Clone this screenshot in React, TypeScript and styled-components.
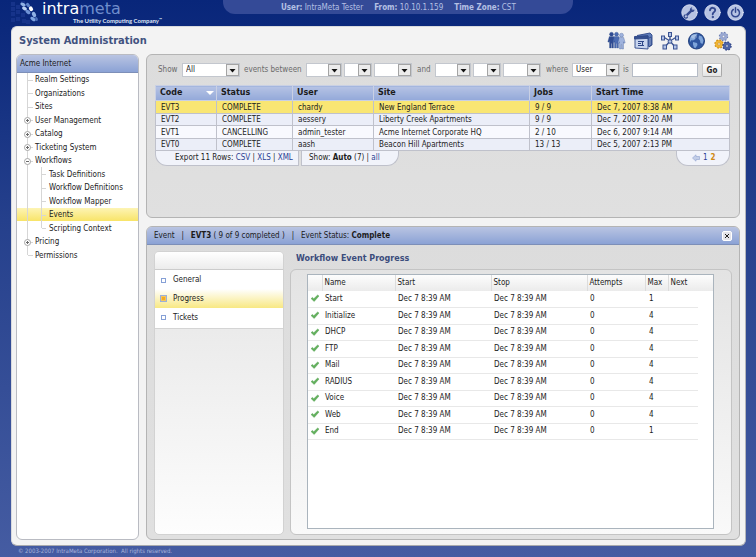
import React from "react";
import styled, { createGlobalStyle, css } from "styled-components";

const UI = `"DejaVu Sans Condensed", "Noto Sans", sans-serif`;
const WIDE = `"DejaVu Sans", sans-serif`;

const Global = createGlobalStyle`
  * { box-sizing: border-box; }
  body { margin: 0; background: #455ca2; font-family: ${UI}; font-size: 8px; line-height: 12px; color: #1c1c1c; }
  button, input, select { font: inherit; color: inherit; }
`;

const Page = styled.div`
  display: flex;
  flex-direction: column;
  min-height: 100vh;
  padding: 0 10px 0 11px;
  background: linear-gradient(#08267a 0, #0c297c 30px, #25408c 220px, #455ca2 100%);
`;

const TopBar = styled.header`
  display: grid;
  grid-template-columns: 16fr 350px 13fr;
  height: 26px;
`;

const Brand = styled.div`
  display: flex;
  align-items: flex-start;
  white-space: nowrap;
`;

const BrandWords = styled.div`
  display: flex;
  flex-direction: column;
  padding-left: 1px;
`;

const BrandName = styled.span`
  font: 16px/18px ${WIDE};
  color: #ffffff;
  span { color: #6f8dcc; }
`;

const Tagline = styled.span`
  display: flex;
  padding-left: 31px;
  font: bold 6px/6px Lato, sans-serif;
  color: #dfe5f6;
  sup { font-size: 4px; line-height: 4px; }
`;

const Session = styled.div`
  display: flex;
  justify-content: center;
  gap: 11px;
  height: 14px;
  padding-top: 2px;
  border-radius: 0 0 12px 12px;
  background: #344a97;
  color: #b4c0e4;
  white-space: nowrap;
`;

const TopTools = styled.div`
  display: flex;
  justify-content: flex-end;
  gap: 6px;
  padding: 4px 2px 0 0;
`;

const IconButton = styled.button`
  display: flex;
  align-self: flex-start;
  padding: 0;
  border: 0;
  background: none;
  cursor: pointer;
`;

const Shell = styled.main`
  flex: 1;
  display: flex;
  flex-direction: column;
  padding: 0 5px 5px 4px;
  border: 1px solid #d8dade;
  border-bottom-color: #a8aaae;
  border-right-color: #b4b6ba;
  border-radius: 6px;
  background: #f3f3f3;
`;

const TitleRow = styled.div`
  display: flex;
  align-items: center;
  justify-content: space-between;
  height: 27px;
  padding: 0 7px 0 3px;
`;

const Title = styled.h1`
  margin: 0;
  font: bold 11px/16px ${UI};
  color: #41527f;
`;

const ModuleNav = styled.nav`
  display: flex;
  gap: 7px;
`;

const Columns = styled.div`
  flex: 1;
  display: grid;
  grid-template-columns: 123px minmax(0, 1fr);
  gap: 7px;
`;

const Sidebar = styled.aside`
  border: 1px solid #b9bbc2;
  border-radius: 6px;
  background: #ffffff;
  overflow: hidden;
`;

const barFill = css`
  background: linear-gradient(#b9c4e2, #8ba2d5);
  border-bottom: 1px solid #7d8fb8;
`;

const SideHead = styled.div`
  ${barFill}
  height: 18px;
  padding: 3px 3px;
`;

const Tree = styled.ul`
  list-style: none;
  margin: 0;
  padding: 0;
`;

const TreeItem = styled.li<{ $deep?: boolean; $active?: boolean }>`
  display: flex;
  align-items: center;
  height: 13px;
  padding-left: ${(p) => (p.$deep ? 10 : 5)}px;
  background: ${(p) => (p.$active ? "linear-gradient(#fdf4b4, #f8e468)" : "none")};
  &:nth-child(even) { height: 14px; }
  svg { flex: none; }
`;

const TreeLink = styled.a`
  color: #1c1c1c;
  text-decoration: none;
  white-space: nowrap;
  line-height: 13px;
`;

const Work = styled.div`
  display: grid;
  grid-template-rows: 164px 1fr;
  gap: 8px;
`;

const Panel = styled.section`
  display: flex;
  flex-direction: column;
  border: 1px solid #b4b4b4;
  border-radius: 6px;
  background: linear-gradient(#dcdcdc, #e0e0e0);
  overflow: hidden;
`;

const Filter = styled.form`
  display: flex;
  align-items: center;
  height: 30px;
  padding: 0 0 0 11px;
  color: #6b6b6b;
  white-space: nowrap;
`;

const FilterWord = styled.label<{ $w: number }>`
  flex: none;
  width: ${(p) => p.$w}px;
`;

const SelectBox = styled.span<{ $w: number; $gap?: number }>`
  display: grid;
  width: ${(p) => p.$w}px;
  margin-right: ${(p) => p.$gap ?? 2}px;
  > * { grid-area: 1 / 1; }
  svg { justify-self: end; align-self: center; margin-right: 1px; pointer-events: none; }
`;

const SelectField = styled.select`
  appearance: none;
  width: 100%;
  height: 14px;
  padding: 0 0 0 3px;
  border: 1px solid #c3c7ce;
  border-radius: 0;
  background: #ffffff;
  color: #1c1c1c;
`;

const TextField = styled.input`
  width: 66px;
  height: 14px;
  margin-right: 4px;
  padding: 0 3px;
  border: 1px solid #b6bcc6;
  background: #ffffff;
`;

const GoButton = styled.button`
  height: 14px;
  width: 20px;
  padding: 0;
  border: 1px solid #c8c8c8;
  border-right-color: #a8a8a8;
  border-bottom-color: #a8a8a8;
  border-radius: 2px;
  background: linear-gradient(#ffffff, #e4e4e4);
  color: #222222;
  font-weight: bold;
  line-height: 11px;
`;

const EventsWrap = styled.div`
  padding: 0 9px 0 8px;
`;

const EventsTable = styled.table`
  width: 100%;
  table-layout: fixed;
  border-collapse: collapse;
  th, td { border: 1px solid #bfc1cb; padding: 0 0 0 5px; text-align: left; white-space: nowrap; }
  th {
    height: 15px;
    padding-left: 4px;
    border-color: #c9d0e4;
    background: linear-gradient(#b6c3e4, #93a8d9);
    font: bold 8px/12px ${WIDE};
  }
  td { height: 13px; line-height: 11px; }
  tbody tr:nth-child(even) td { height: 12px; }
`;

const HeadCell = styled.div`
  display: flex;
  justify-content: space-between;
  align-items: center;
  padding-right: 2px;
`;

const EventRow = styled.tr<{ $tone: "active" | "even" | "odd" }>`
  background: ${(p) => ({ active: "#f9e673", even: "#ebeef8", odd: "#f8f9fe" })[p.$tone]};
`;

const TableFoot = styled.div`
  display: flex;
  gap: 2px;
`;

const FootTab = styled.div<{ $w: number; $shape: string; $pad: number }>`
  display: flex;
  align-items: center;
  gap: 3px;
  width: ${(p) => p.$w}px;
  height: 15px;
  padding-left: ${(p) => p.$pad}px;
  border: 1px solid #bfc1cb;
  border-top: 0;
  border-radius: ${(p) => p.$shape};
  background: #f1f3fa;
  white-space: nowrap;
  &:last-child { margin-left: auto; }
`;

const Link = styled.a<{ $here?: boolean }>`
  color: ${(p) => (p.$here ? "#d08a14" : "#2b3f94")};
  font-weight: ${(p) => (p.$here ? "bold" : "normal")};
  text-decoration: none;
`;

const EventBar = styled.header`
  ${barFill}
  display: flex;
  align-items: center;
  height: 18px;
  padding: 0 7px 0 7px;
  white-space: pre;
`;

const CloseButton = styled.button`
  display: grid;
  place-items: center;
  width: 10px;
  height: 10px;
  margin-left: auto;
  padding: 0;
  border: 1px solid #ffffff;
  border-radius: 2px;
  background: #e4e4ea;
`;

const EventBody = styled.div`
  flex: 1;
  display: grid;
  grid-template-columns: 130px minmax(0, 1fr);
  gap: 6px;
  padding: 6px 7px 4px;
`;

const StepNav = styled.nav`
  border: 1px solid #d2d2d2;
  border-radius: 5px;
  background: linear-gradient(#e4e4e4, #fdfdfd);
  overflow: hidden;
`;

const StepCap = styled.div`
  height: 18px;
  background: linear-gradient(#ffffff, #ececec);
  border-bottom: 1px solid #cccccc;
`;

const StepList = styled.div`
  padding: 1px 0 1px;
  background: #ffffff;
  border-bottom: 1px solid #d4d4d4;
`;

const StepLink = styled.a<{ $active?: boolean }>`
  display: flex;
  align-items: center;
  gap: 6px;
  height: 18px;
  padding-left: 5px;
  color: #1c1c1c;
  text-decoration: none;
  background: ${(p) => (p.$active ? "linear-gradient(#ffffff 0, #f8e883 100%)" : "none")};
  & + & { height: 19px; }
`;

const Detail = styled.div`
  display: flex;
  flex-direction: column;
`;

const DetailTitle = styled.h2`
  margin: 0;
  height: 18px;
  padding: 2px 0 0 6px;
  font: bold 8px/12px ${WIDE};
  color: #3b4c7c;
`;

const Frame = styled.div`
  flex: 1;
  display: flex;
  padding: 4px 17px 5px 16px;
  border: 1px solid #c4c4c4;
  border-radius: 6px;
  background: linear-gradient(#e3e3e3, #f9f9f9);
`;

const GridBox = styled.div`
  flex: 1;
  border: 1px solid #aab4bd;
  padding-right: 15px;
  background: linear-gradient(#fdfdfd, #ebebeb) top / 100% 16px no-repeat, #ffffff;
`;

const ProgressTable = styled.table`
  width: 100%;
  table-layout: fixed;
  border-collapse: collapse;
  th, td { padding: 0 0 0 3px; text-align: left; font-weight: normal; white-space: nowrap; }
  th { height: 16px; border-left: 1px solid #dcdcdc; padding-left: 2px; }
  th:first-child { border-left: 0; }
  td { height: 16px; line-height: 14px; border-bottom: 1px solid #e8e8e8; }
  tbody tr:nth-child(even) td { height: 17px; }
  td:first-child { padding-left: 2px; }
  td:nth-child(6) { padding-left: 4px; }
  svg { display: block; }
`;

const Copyright = styled.footer`
  height: 11px;
  padding-left: 7px;
  font: 6px/9px ${UI};
  color: #a8b4da;
`;

const LogoMark = () => (
  <svg width="30" height="26" viewBox="0 0 30 26">
    {[[0, 2], [0, 7], [0, 12], [5, 5], [5, 10], [5, 17], [10, 1], [10, 13], [11, 19], [15, 20], [0, 18]].map(([x, y]) => (
      <rect key={`${x}-${y}`} x={x} y={y} width="4" height="4" fill="#16338a" />
    ))}
    <g fill="#8fb0e4">
      <ellipse cx="12" cy="4.500" rx="2.800" ry="1.600" transform="rotate(25 12 4.500)" />
      <ellipse cx="17" cy="5" rx="2.400" ry="1.600" transform="rotate(50 17 5)" fill="#5f84cb" />
      <ellipse cx="13.500" cy="8.500" rx="2.600" ry="1.700" transform="rotate(30 13.500 8.500)" fill="#b9d0f3" />
      <ellipse cx="20" cy="8.800" rx="2.500" ry="1.900" transform="rotate(55 20 8.800)" fill="#ffffff" />
      <ellipse cx="17" cy="12" rx="2.800" ry="1.700" transform="rotate(35 17 12)" fill="#6f93d6" />
      <ellipse cx="23" cy="14.500" rx="2.800" ry="1.900" transform="rotate(65 23 14.500)" />
      <ellipse cx="22" cy="19" rx="3" ry="1.700" transform="rotate(35 22 19)" fill="#7ea3e0" />
      <ellipse cx="25.500" cy="19" rx="2" ry="1.300" transform="rotate(70 25.500 19)" fill="#4c6fba" />
    </g>
  </svg>
);

const Disc = ({ children }: { children: React.ReactNode }) => (
  <svg width="17" height="17" viewBox="0 0 17 17" fill="none" stroke="#33488f" strokeLinecap="round">
    <circle cx="8.500" cy="8.500" r="7.700" fill="#b7c3e3" stroke="#d5dcf0" />
    {children}
  </svg>
);

const WrenchIcon = () => (
  <Disc>
    <path d="M6.300 10.700l4.400-4.400" strokeWidth="2.400" />
    <path d="M4.200 10.800a1.700 1.700 0 1 0 2.200 2.200M12.800 6.200a1.700 1.700 0 1 1-2.200-2.200" strokeWidth="1.300" />
  </Disc>
);
const HelpIcon = () => (
  <Disc>
    <path d="M6 6.300c0-3.400 5.400-3.200 5.200 0-.1 1.800-2.500 1.900-2.500 3.900" strokeWidth="1.900" />
    <circle cx="8.700" cy="13" r=".7" fill="#33488f" />
  </Disc>
);
const PowerIcon = () => (
  <Disc>
    <path d="M6.300 5.500a4 4 0 1 0 4.400 0" strokeWidth="1.500" />
    <path d="M8.500 3.800v4.400" strokeWidth="1.500" />
  </Disc>
);

const Person = ({ x, y, fill }: { x: number; y: number; fill: string }) => (
  <g transform={`translate(${x} ${y})`} fill={fill} stroke="#33508f" strokeWidth=".3">
    <circle cx="3.500" cy="2.200" r="2" />
    <path d="M1.300 4.400h4.400L7.200 9.800l-1.300.5-.4-1.500V16H3.800v-4.400h-.6V16H1.500V8.800l-.4 1.500L-.2 9.800z" />
  </g>
);
const PeopleIcon = () => (
  <svg width="19" height="20" viewBox="0 0 19 20">
    <Person x={1} y={1} fill="#2f4b92" />
    <Person x={6} y={1} fill="#4c6cb2" />
    <Person x={11} y={2} fill="#9fb3dd" />
  </svg>
);
const CardsIcon = () => (
  <svg width="20" height="20" viewBox="0 0 20 20" stroke="#2e4788" strokeWidth=".9">
    <path d="M4 4.500L17 2l2 2v10l-3 2" fill="#5f7dba" />
    <path d="M2 6l13-1v13L2 17z" fill="#c8d5ee" />
    <path d="M1.500 5.500L15 4.800v2.600L1.500 8z" fill="#35508f" />
    <path d="M5 10.500h6M5 12.500h3M5 14.500h6M9.500 10.500v4" fill="none" strokeWidth="1.100" />
    <path d="M16 7l2-1v8l-2 2z" fill="#9db1da" />
  </svg>
);
const HubIcon = () => (
  <svg width="20" height="20" viewBox="0 0 20 20" stroke="#3c5593" fill="#b4c4e6">
    <path d="M10 10V4M10 10L3.500 6M10 10l6.500-4M10 10l-5 6M10 10l5 6" strokeWidth="1.400" />
    <rect x="8.500" y="1.500" width="3" height="4" />
    <rect x="1.500" y="5" width="3" height="4" />
    <rect x="15.500" y="5" width="3" height="4" />
    <rect x="3" y="14" width="3.500" height="4" />
    <rect x="13.500" y="14" width="3.500" height="4" />
    <circle cx="10" cy="10.500" r="1.800" />
  </svg>
);
const GlobeIcon = () => (
  <svg width="19" height="20" viewBox="0 0 19 20">
    <circle cx="9.500" cy="10" r="8" fill="#2f56a0" stroke="#24427f" />
    <path d="M3.500 6c2-2.800 5-3.500 7-3L9 5 7.500 6 8.500 8 6 9.500 4.500 9 3.500 11c-.8-2-.6-3.500 0-5zM6 11l4 1 .5 2-2 3-1.500-.5L6 13.500zM12 4.500l3 1 1.500 4-1 3.500-2-1-.5-2.500-1.500-2z" fill="#7fa5da" />
    <ellipse cx="7" cy="5.500" rx="3" ry="2" fill="#ffffff" opacity=".3" />
  </svg>
);
const Gear = ({ x, y, fill, rim }: { x: number; y: number; fill: string; rim: string }) => (
  <g transform={`translate(${x} ${y})`}>
    <circle r="3.900" fill={fill} stroke={rim} strokeWidth="1.600" strokeDasharray="1.530 1.530" />
    <circle r="3.600" fill={fill} />
    <circle r="1.200" fill="#f3f3f3" stroke={rim} strokeWidth=".6" />
  </g>
);
const GearsIcon = () => (
  <svg width="20" height="20" viewBox="0 0 20 20">
    <Gear x={10.5} y={5.5} fill="#9aa9d2" rim="#6f80b4" />
    <Gear x={6} y={13} fill="#f0b433" rim="#c98812" />
    <Gear x={14} y={15} fill="#4c64a8" rim="#2c3f80" />
  </svg>
);

type Joint = "leaf" | "plus" | "minus" | "last";

const TreeJoint = ({ kind, deep }: { kind: Joint; deep?: boolean }) => (
  <svg width={deep ? 22 : 13} height="14" viewBox={deep ? "0 0 22 14" : "0 0 13 14"} fill="none" stroke="#d6d6d6">
    {deep && <path d="M.5 0v14" />}
    <path d={`M${deep ? 14.5 : 5.5} 0v${kind === "last" ? 7 : 14}`} />
    <path d={`M${deep ? 15 : 6} 7.500h${deep ? 4 : 5}`} />
    {(kind === "plus" || kind === "minus") && (
      <>
        <circle cx="5.500" cy="7.500" r="3" fill="#ffffff" stroke="#a6a6a6" />
        <path d={kind === "plus" ? "M4 7.500h3M5.500 6v3" : "M4 7.500h3"} stroke="#6a6a6a" />
      </>
    )}
  </svg>
);

const DropArrow = () => (
  <svg width="13" height="12" viewBox="0 0 13 12">
    <rect x=".5" y=".5" width="12" height="11" fill="#ececec" stroke="#a4a4a4" />
    <path d="M3.500 5h6l-3 3.500z" fill="#111111" />
  </svg>
);

const Check = () => (
  <svg width="10" height="9" viewBox="0 0 10 9">
    <path d="M1 4.600l1.600-1.200 1.200 1.300L7.600 1l1.400 1-4.800 5.500z" fill="#62b05c" stroke="#4c994a" strokeWidth=".4" />
  </svg>
);

const Marker = ({ on }: { on?: boolean }) => (
  <svg width="7" height="7" viewBox="0 0 7 7">
    <rect x="1.500" y="1.500" width="4" height="4" fill="#ffffff" stroke="#86a0d6" />
    {on && <rect x=".5" y=".5" width="6" height="6" fill="#f5c65a" stroke="#9bb0d8" />}
    {on && <rect x="2" y="2" width="3" height="3" fill="#f3ab22" />}
  </svg>
);

const tree: { label: string; kind: Joint; deep?: boolean; active?: boolean }[] = [
  { label: "Realm Settings", kind: "leaf" },
  { label: "Organizations", kind: "leaf" },
  { label: "Sites", kind: "leaf" },
  { label: "User Management", kind: "plus" },
  { label: "Catalog", kind: "plus" },
  { label: "Ticketing System", kind: "plus" },
  { label: "Workflows", kind: "minus" },
  { label: "Task Definitions", kind: "leaf", deep: true },
  { label: "Workflow Definitions", kind: "leaf", deep: true },
  { label: "Workflow Mapper", kind: "leaf", deep: true },
  { label: "Events", kind: "leaf", deep: true, active: true },
  { label: "Scripting Context", kind: "last", deep: true },
  { label: "Pricing", kind: "plus" },
  { label: "Permissions", kind: "last" },
];

const events = [
  ["EVT3", "COMPLETE", "chardy", "New England Terrace", "9 / 9", "Dec 7, 2007 8:38 AM"],
  ["EVT2", "COMPLETE", "aessery", "Liberty Creek Apartments", "9 / 9", "Dec 7, 2007 8:20 AM"],
  ["EVT1", "CANCELLING", "admin_tester", "Acme Internet Corporate HQ", "2 / 10", "Dec 6, 2007 9:14 AM"],
  ["EVT0", "COMPLETE", "aash", "Beacon Hill Apartments", "13 / 13", "Dec 5, 2007 2:13 PM"],
];

const steps = ["Start", "Initialize", "DHCP", "FTP", "Mail", "RADIUS", "Voice", "Web", "End"];

const modules = [
  { label: "People", Icon: PeopleIcon },
  { label: "Cards", Icon: CardsIcon },
  { label: "Network", Icon: HubIcon },
  { label: "Globe", Icon: GlobeIcon },
  { label: "Settings", Icon: GearsIcon },
];

const Choice = ({ label, w, gap, id, value = "" }: { label: string; w: number; gap?: number; id?: string; value?: string }) => (
  <SelectBox $w={w} $gap={gap}>
    <SelectField id={id} aria-label={label} defaultValue={value}>
      <option>{value}</option>
    </SelectField>
    <DropArrow />
  </SelectBox>
);

export default function App() {
  return (
    <>
      <Global />
      <Page>
        <TopBar>
          <Brand>
            <LogoMark />
            <BrandWords>
              <BrandName>intra<span>meta</span></BrandName>
              <Tagline>The Utility Computing Company<sup>™</sup></Tagline>
            </BrandWords>
          </Brand>
          <Session>
            <span><b>User:</b> IntraMeta Tester</span>
            <span><b>From:</b> 10.10.1.159</span>
            <span><b>Time Zone:</b> CST</span>
          </Session>
          <TopTools>
            <IconButton aria-label="Tools"><WrenchIcon /></IconButton>
            <IconButton aria-label="Help"><HelpIcon /></IconButton>
            <IconButton aria-label="Log out"><PowerIcon /></IconButton>
          </TopTools>
        </TopBar>

        <Shell>
          <TitleRow>
            <Title>System Administration</Title>
            <ModuleNav>
              {modules.map(({ label, Icon }) => (
                <IconButton key={label} aria-label={label}><Icon /></IconButton>
              ))}
            </ModuleNav>
          </TitleRow>

          <Columns>
            <Sidebar>
              <SideHead>Acme Internet</SideHead>
              <Tree>
                {tree.map((n) => (
                  <TreeItem key={n.label} $deep={n.deep} $active={n.active}>
                    <TreeJoint kind={n.kind} deep={n.deep} />
                    <TreeLink href="#">{n.label}</TreeLink>
                  </TreeItem>
                ))}
              </Tree>
            </Sidebar>

            <Work>
              <Panel>
                <Filter onSubmit={(e) => e.preventDefault()}>
                  <FilterWord $w={24} htmlFor="kind">Show</FilterWord>
                  <Choice id="kind" label="Show" w={58} gap={4} value="All" />
                  <FilterWord $w={62} htmlFor="from-month">events between</FilterWord>
                  <Choice id="from-month" label="From month" w={36} />
                  <Choice label="From day" w={28} />
                  <Choice label="From year" w={38} gap={5} />
                  <FilterWord $w={18} htmlFor="to-month">and</FilterWord>
                  <Choice id="to-month" label="To month" w={36} />
                  <Choice label="To day" w={28} />
                  <Choice label="To year" w={38} gap={5} />
                  <FilterWord $w={26} htmlFor="field">where</FilterWord>
                  <Choice id="field" label="Field" w={48} gap={3} value="User" />
                  <FilterWord $w={9} htmlFor="term">is</FilterWord>
                  <TextField id="term" />
                  <GoButton>Go</GoButton>
                </Filter>
                <EventsWrap>
                  <EventsTable>
                    <colgroup>
                      <col width="61" /><col width="76" /><col width="81" /><col /><col width="62" /><col width="138" />
                    </colgroup>
                    <thead>
                      <tr>
                        <th>
                          <HeadCell>
                            Code
                            <svg width="8" height="4" viewBox="0 0 8 4"><path d="M0 0h8L4 4z" fill="#ffffff" /></svg>
                          </HeadCell>
                        </th>
                        <th>Status</th><th>User</th><th>Site</th><th>Jobs</th><th>Start Time</th>
                      </tr>
                    </thead>
                    <tbody>
                      {events.map((r, i) => (
                        <EventRow key={r[0]} $tone={i === 0 ? "active" : i % 2 ? "even" : "odd"}>
                          {r.map((c, j) => <td key={j}>{c}</td>)}
                        </EventRow>
                      ))}
                    </tbody>
                  </EventsTable>
                  <TableFoot>
                    <FootTab $w={144} $pad={19} $shape="0 0 0 12px">
                      <span>Export 11 Rows: <Link href="#">CSV</Link> | <Link href="#">XLS</Link> | <Link href="#">XML</Link></span>
                    </FootTab>
                    <FootTab $w={98} $pad={7} $shape="0 0 12px 0">
                      <span>Show: <b>Auto</b> (7) | <Link href="#">all</Link></span>
                    </FootTab>
                    <FootTab $w={54} $pad={15} $shape="0 0 12px 12px">
                      <svg width="8" height="8" viewBox="0 0 8 8">
                        <path d="M.5 4L4 .8v1.700h3.500v3H4v1.700z" fill="#c3cee8" stroke="#9aabd2" strokeWidth=".7" />
                      </svg>
                      <Link href="#">1</Link>
                      <Link href="#" $here>2</Link>
                    </FootTab>
                  </TableFoot>
                </EventsWrap>
              </Panel>

              <Panel>
                <EventBar>
                  <span>{"Event   |   "}<b>EVT3</b>{" ( 9 of 9 completed )   |   Event Status: "}<b>Complete</b></span>
                  <CloseButton aria-label="Close">
                    <svg width="4" height="4" viewBox="0 0 4 4"><path d="M0 0l4 4M4 0L0 4" stroke="#222222" /></svg>
                  </CloseButton>
                </EventBar>
                <EventBody>
                  <StepNav>
                    <StepCap />
                    <StepList>
                      <StepLink href="#"><Marker />General</StepLink>
                      <StepLink href="#" $active><Marker on />Progress</StepLink>
                      <StepLink href="#"><Marker />Tickets</StepLink>
                    </StepList>
                  </StepNav>
                  <Detail>
                    <DetailTitle>Workflow Event Progress</DetailTitle>
                    <Frame>
                      <GridBox>
                        <ProgressTable>
                          <colgroup>
                            <col width="14" /><col width="73" /><col width="96" /><col width="96" /><col width="58" /><col width="23" /><col />
                          </colgroup>
                          <thead>
                            <tr>
                              <th /><th>Name</th><th>Start</th><th>Stop</th><th>Attempts</th><th>Max</th><th>Next</th>
                            </tr>
                          </thead>
                          <tbody>
                            {steps.map((s, i) => (
                              <tr key={s}>
                                <td><Check /></td>
                                <td>{s}</td>
                                <td>Dec 7 8:39 AM</td>
                                <td>Dec 7 8:39 AM</td>
                                <td>0</td>
                                <td>{i === 0 || i === steps.length - 1 ? 1 : 4}</td>
                                <td />
                              </tr>
                            ))}
                          </tbody>
                        </ProgressTable>
                      </GridBox>
                    </Frame>
                  </Detail>
                </EventBody>
              </Panel>
            </Work>
          </Columns>
        </Shell>
        <Copyright>© 2003-2007 IntraMeta Corporation.&nbsp; All rights reserved.</Copyright>
      </Page>
    </>
  );
}
